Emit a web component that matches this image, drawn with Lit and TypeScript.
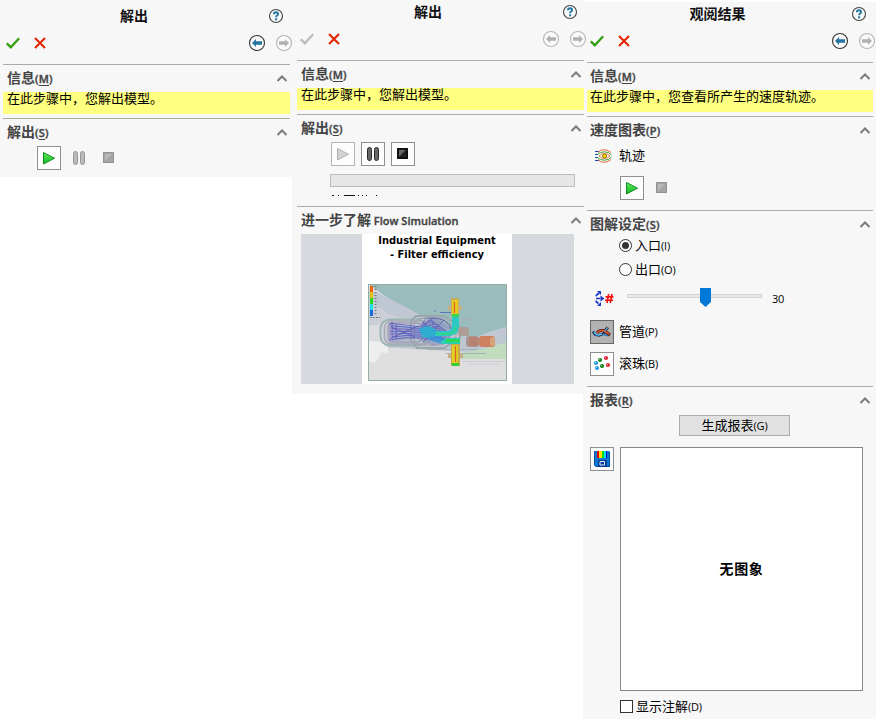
import { LitElement, html, css, svg, nothing } from "lit";
import { customElement, property } from "lit/decorators.js";

const sharedText = css`
  :host {
    box-sizing: border-box;
    font-family: "Open Sans", "Noto Sans CJK SC", sans-serif;
    font-size: 13px;
    line-height: 16px;
    color: #000;
  }
  svg { display: block; }
`;

const glyph: Record<string, unknown> = {
  playOn: svg`<defs><linearGradient id="g" x1="0" y1="0" x2="0" y2="1"><stop offset="0" stop-color="#5cf05c"/><stop offset="1" stop-color="#12b524"/></linearGradient></defs>
    <path d="M6.5 6.500V18L17.500 12.200Z" fill="url(#g)" stroke="#148a1e"/>`,
  playOff: svg`<path d="M6.500 6.500V18L17.500 12.200Z" fill="#d2d2d2" stroke="#b4b4b4"/>`,
  pauseOn: svg`<rect x="6.500" y="5.500" width="4" height="13" rx="2" fill="#686868" stroke="#282828"/><rect x="13.500" y="5.500" width="4" height="13" rx="2" fill="#686868" stroke="#282828"/>`,
  pauseOff: svg`<rect x="6.500" y="5.500" width="4" height="13" rx="2" fill="#bbb" stroke="#979797"/><rect x="13.500" y="5.500" width="4" height="13" rx="2" fill="#bbb" stroke="#979797"/>`,
  stopOn: svg`<rect x="6" y="6" width="11" height="11" fill="#111"/><path d="M8 15V8h7Z" fill="#666"/><path d="M8 15h7V8Z" fill="#222"/>`,
  stopOff: svg`<rect x="6.500" y="6.500" width="10" height="10" fill="#a5a5a5" stroke="#939393"/><path d="M8 15V8h7Z" fill="#b9b9b9"/>`,
  pipes: svg`<path d="M3 11.500L5 14.500L9 15.500L13 14L15 11.500" fill="none" stroke="#17365d" stroke-width="2.600"/>
    <path d="M4 12L6 14.500L9 15L12 14" fill="none" stroke="#58b5ef" stroke-width="1.400"/>
    <path d="M13 14L16 15.500H19" fill="none" stroke="#2c7cc0" stroke-width="1.600"/>
    <path d="M7 13Q9 10 13 10.500L16 12L20 15M14.500 11L18 7.500" fill="none" stroke="#3c1c1c" stroke-width="3"/>
    <path d="M7 13Q9 10 13 10.500L16 12L19.500 14.500" fill="none" stroke="#f05a28" stroke-width="1.500"/>
    <path d="M14.500 11L18 7.500" stroke="#58a5df" stroke-width="1.300"/>`,
  balls: svg`${[
    [16, 6, "#e02030"], [10, 8, "#108018"], [6, 11, "#2098e0"], [12, 14, "#108018"], [18, 13, "#e02030"], [7, 16, "#2098e0"],
  ].map(([x, y, c]) => svg`<circle cx=${x} cy=${y} r="2.100" fill=${c}/><circle cx=${Number(x) - 0.5} cy=${Number(y) - 0.5} r=".7" fill="#fff" opacity=".55"/>`)}`,
  disk: svg`<path d="M4 4H19L20 5V20H6L4 18Z" fill="#0878d4"/><path d="M4.500 4V18L6 19.500H19.500V5" fill="none" stroke="#0650a0"/>
    <path d="M7 4h2v7H7Z" fill="#e00"/><path d="M9 4h3v7H9Z" fill="#fd0"/><path d="M12 4h2v7h-2Z" fill="#0d2"/><path d="M14 4h2v7h-2Z" fill="#0de"/><path d="M16 4h1v7h-1Z" fill="#00c"/>
    <path d="M8 13h9v7H8Z" fill="#073d90"/><path d="M10 14.500h4.500V18H10Z" fill="#063a98" stroke="#d9ecff"/>`,
};

@customElement("tool-button")
class ToolButton extends LitElement {
  @property() icon = "";
  @property() look = "framed";
  static styles = [sharedText, css`
    :host { display: block; flex: none; width: 24px; height: 24px; }
    .box { box-sizing: border-box; width: 24px; height: 24px; }
    .box svg { width: 24px; height: 24px; }
    .framed, .faint, .pressed { border: 1px solid #8f8f8f; background: #fdfdfd; }
    .faint { border-color: #b5b5b5; }
    .pressed { border-color: #666; background: #b2b2b2; }
    .framed svg, .faint svg, .pressed svg { margin: -1px; }
  `];
  render() {
    return html`<div class="box ${this.look}"><svg viewBox="0 0 24 24">${glyph[this.icon]}</svg></div>`;
  }
}

@customElement("panel-section")
class PanelSection extends LitElement {
  @property() label = "";
  @property() key = "";
  @property() suffix = "";
  static styles = [sharedText, css`
    :host { display: block; border-top: 1px solid #aaa; }
    .head { height: 27px; display: flex; align-items: center; justify-content: space-between; padding: 0 2px 0 var(--inset, 4px); box-sizing: border-box; color: #444; }
    .name { font-size: 14px; font-weight: 600; white-space: nowrap; line-height: 20px; }
    .small, .key { font-size: 11px; -webkit-text-stroke: .35px #444; }
    .key { letter-spacing: .2px; }
    u { text-underline-offset: 2px; }
  `];
  render() {
    return html`<div class="head">
        <span class="name">${this.label}${this.key ? html`<span class="key">(<u>${this.key}</u>)</span>` : nothing}${this.suffix ? html`<span class="small"> ${this.suffix}</span>` : nothing}</span>
        <svg width="12" height="8" viewBox="0 0 12 8"><path d="M1.500 6L6 1.500L10.500 6" fill="none" stroke="#7b7b7b" stroke-width="2"/></svg>
      </div><slot></slot>`;
  }
}

@customElement("property-panel")
class PropertyPanel extends LitElement {
  @property() heading = "";
  @property() info = "";
  @property({ type: Boolean }) busy = false;
  static styles = [sharedText, css`
    :host { display: block; background: #f7f7f7; }
    .title { height: 24px; display: flex; align-items: center; padding-right: 6px; }
    .title b { flex: 1; padding-right: 3px; text-align: center; font-size: 14px; font-weight: 700; color: #111; line-height: 20px; }
    .tools { height: 30px; display: flex; align-items: center; margin: 0 -3px 6px 0; padding-left: 3px; }
    .grow { flex: 1; }
    .cross { margin-left: 14px; }
    .nav { display: flex; gap: 9px; width: 45px; }
    .note { background: #ffff80; height: 22px; line-height: 12px; padding-left: var(--inset, 4px); margin-bottom: 4px; box-sizing: border-box; white-space: nowrap; }
  `];
  arrow(on: boolean, back: boolean) {
    return html`<svg width="18" height="18" viewBox="0 0 18 18">
      <circle cx="9" cy="9" r="7.500" fill="#fafafa" stroke=${on ? "#333" : "#b5b5b5"} stroke-width="1.100"/>
      <path transform=${back ? "" : "translate(18 0) scale(-1 1)"} d="M4 9L8 5V7.200H14V10.800H8V13Z" fill=${on ? "#2475a0" : "#b1b1b1"}/></svg>`;
  }
  render() {
    return html`
      <div class="title"><b>${this.heading}</b>
        <svg width="16" height="16" viewBox="0 0 16 16"><circle cx="8" cy="8" r="6.500" fill="#f6f9fa" stroke="#444" stroke-width="1.100"/>
          <path d="M5.900 6.200Q6 4.300 8.100 4.300Q10.200 4.400 10.100 6.100Q10 7.100 8.900 7.700Q8.100 8.200 8.100 9.300" fill="none" stroke="#2475a0" stroke-width="1.900"/><rect x="7.100" y="10.300" width="2" height="2" fill="#2475a0"/></svg>
      </div>
      <div class="tools">
        <svg width="14" height="12" viewBox="0 0 14 12"><path d="M0.800 6.300L4.800 10.200L13.200 1.200" fill="none" stroke=${this.busy ? "#bcbcbc" : "#35a012"} stroke-width="2.400"/></svg>
        <svg class="cross" width="12" height="12" viewBox="0 0 12 12"><path d="M1 1L11 11M11 1L1 11" stroke="#e32400" stroke-width="2.100"/></svg>
        <span class="grow"></span>
        <div class="nav">${this.arrow(!this.busy, true)}${this.arrow(false, false)}</div>
      </div>
      <panel-section label="信息" key="M"><div class="note">${this.info}</div></panel-section>
      <slot></slot>`;
  }
}

@customElement("flow-picture")
class FlowPicture extends LitElement {
  static styles = css`:host, svg { display: block; }`;
  render() {
    const lanes = [0, 1, 2, 3, 4, 5, 6];
    return html`<svg width="139" height="97" viewBox="0 0 139 97">
      <rect width="139" height="97" fill="#dedede"/>
      <path d="M0 0H139V43L122 48L106 54L60 42L14 10Z" fill="#9bbcbd"/>
      <path d="M8 8L40 24L65 39L105 54L139 43V66L100 68L60 66L0 62V8Z" fill="#bec7d2"/>
      <path d="M0 14L20 30L44 36L20 62L0 65Z" fill="#cccfd7"/>
      <path d="M0 42L14 40V62L0 72Z" fill="#dcdde0"/>
      <path d="M85 70L112 66L139 58V75H86Z" fill="#c1dbbd"/>
      <path d="M1 57L12 58L20 62V70L14 68L8 78H1Z" fill="#eee"/>
      <g fill="none">
        <rect x="12.500" y="35.500" width="46" height="26" rx="9" stroke="#9db4b4" stroke-width="2"/>
        <rect x="16.500" y="37" width="46" height="23" rx="7" stroke="#a7a9b6" stroke-width="1.500"/>
        <rect x="20" y="39" width="34" height="19" rx="4" stroke="#8f8ca8"/>
        <path d="M43 37L48 32H76L92 43V54L76 64H49L43 57Z" stroke="#9aa5ac" stroke-width="2"/>
        <path d="M46 39L50 34.500H74L88 45V53L74 61H51L46 56Z" stroke="#a29aa8"/>
        <path d="M60 65.500H110M78 69.500H118M80 35.500H104V40M82 38H96" stroke="#a3b2b4"/>
        <path d="M94 77.500H138M100 80H130" stroke="#cdcfd8"/>
      </g>
      <path d="M23 39L47 43L66 33L84 44L80 57L66 62L48 55L24 57Z" fill="#858bbb" opacity=".55"/>
      <g fill="none" stroke-width=".8" opacity=".85">
        ${lanes.map(i => svg`<path d="M${22 + (i % 3)} ${39 + i * 2.8}L38 ${41 + i * 2.1}L52 ${43 + i * 1.8}L${64 + i * 2} ${36 + i * 3.6}" stroke=${i % 2 ? "#3b58cf" : "#5b50bf"}/>
          <ellipse cx=${60 + i * 2} cy=${42 + i * 1.500} rx=${5 + i} ry=${8 - i * 0.6} stroke="#5a5fb8"/>`)}
        <path d="M22 39V57M24 38V56M28 41V55M23 43L47 53M23 54L50 42M54 38L80 59M55 58L76 36M62 34Q79 33 84 46" stroke="#4e46b8"/>
        <path d="M66 28L68 26M72 28.500H88" stroke="#4356b0"/>
      </g>
      <path d="M50 46L58 42L67 46L75 54L83 57L73 60L61 56Z" fill="#2f98de" opacity=".75"/>
      <path d="M52 44L62 42L69 46L66 53L54 54Z" fill="#2ab4d0" opacity=".75"/>
      <path d="M68 47H80Q84 46 84 41V31H91V43Q91 51 81 52H67Z" fill="#2cc9c4"/>
      <path d="M72 58L79 54H92V60H75Z" fill="#2acfb0"/><path d="M78 56.500H92" stroke="#29dc45" stroke-width="2.500"/>
      <path d="M68 50H82Q87 49 88 42" fill="none" stroke="#35d77a" stroke-width="1.500"/>
      <rect x="90" y="43" width="11" height="9" rx="3" fill="#ad9d97"/><rect x="98" y="52" width="13" height="11" rx="3" fill="#aa9590"/><rect x="101" y="53" width="9" height="9" rx="2" fill="#b78270"/>
      <rect x="111" y="52" width="16" height="11" rx="3" fill="#cf805f"/><rect x="122" y="53" width="5" height="9" rx="2" fill="#d4a577"/>
      <path d="M80 22H94V26H80ZM80 70H95V74H80Z" fill="#c8ae86"/>
      <rect x="83" y="14" width="8" height="17" fill="#cfaa56"/><rect x="84" y="16" width="6" height="14" fill="#e3cc22"/><rect x="84" y="30" width="7" height="3" fill="#3bd44c"/>
      <rect x="83" y="60" width="9" height="22" fill="#c9a849"/><rect x="84" y="61" width="6" height="18" fill="#dfcd22"/><rect x="84" y="79" width="7" height="3" fill="#30cf35"/>
      <path d="M86.500 18V29M87.500 62V78" stroke="#e06020" stroke-width="1.200"/>
      ${["#f2640f", "#dfc319", "#25da25", "#1be1e9", "#1c69df"].map((c, i) => svg`<rect x="2" y=${2 + i * 6} width="3" height="6" fill=${c}/>`)}
      <path d="M7.500 2V32" stroke="#737b80" stroke-width="2" stroke-dasharray="1 2"/><path d="M2 33.500H12" stroke="#68806c" stroke-dasharray="2 1"/>
      <rect x=".5" y=".5" width="138" height="96" fill="none" stroke="#95aba5"/>
    </svg>`;
  }
}

@customElement("app-root")
class AppRoot extends LitElement {
  static styles = [sharedText, css`
    :host { display: flex; width: 879px; height: 719px; background: #fff; align-items: flex-start; overflow: hidden; }
    property-panel { flex: none; box-sizing: border-box; }
    .solve { width: 292px; height: 177px; padding: 4px 2px 0 3px; }
    .running { width: 292px; margin-right: -1px; height: 394px; padding-left: 5px; position: relative; z-index: 1; }
    .results { width: 293px; height: 717px; margin-top: 2px; padding: 0 3px 0 4px; --inset: 3px; }
    .row { display: flex; align-items: center; }
    .buttons { gap: 6px; padding-left: 34px; }
    .progress { box-sizing: border-box; width: 245px; height: 13px; border: 1px solid #bcbcbc; background: #e6e6e6; margin: 8px 0 7px 33px; }
    .status { margin: 0 0 10px 33px; }
    .learn { box-sizing: border-box; width: 273px; height: 150px; margin-left: 4px; background: #d6dade; padding-left: 61px; }
    .card { width: 150px; height: 150px; background: #fff; display: flex; flex-direction: column; align-items: center; justify-content: space-between; box-sizing: border-box; padding-bottom: 3px; }
    .card-title { font: bold 11px/14px "DejaVu Sans Condensed", "DejaVu Sans", sans-serif; text-align: center; white-space: nowrap; }
    .small { font-size: 11px; letter-spacing: -.2px; }
    .trace { height: 23px; gap: 7px; padding-left: 8px; }
    .trace span, .option > span { margin-top: -2px; }
    .play { gap: 6px; padding: 9px 0 10px 33px; }
    .radio { height: 15px; padding-left: 32px; gap: 3px; margin-bottom: 9px; }
    .slider { height: 21px; margin-top: 11px; padding-left: 8px; }
    .track { box-sizing: border-box; width: 135px; height: 4px; border: 1px solid #d2d2d2; background: #e8e8e8; margin: -5px 10px 0 13px; position: relative; }
    .thumb { position: absolute; left: 72px; top: -7px; }
    .option { gap: 5px; padding-left: 3px; margin-bottom: 8px; }
    .option.first { margin-top: 11px; }
    .option.last { margin-bottom: 10px; }
    .report { box-sizing: border-box; width: 111px; height: 21px; border: 1px solid #adadad; background: #e1e1e1; text-align: center; line-height: 18px; margin: 1px 0 11px 92px; }
    .preview { display: flex; gap: 6px; padding-left: 3px; }
    .canvas { box-sizing: border-box; width: 243px; height: 244px; border: 1px solid #828790; background: #fff; display: flex; align-items: center; justify-content: center; font-size: 14px; font-weight: 700; letter-spacing: .6px; }
    .check { height: 13px; gap: 3px; padding-left: 33px; margin-top: 9px; }
    .tick { box-sizing: border-box; width: 13px; height: 13px; border: 1px solid #333; background: #fff; }
  `];
  radio(label: string, key: string, on: boolean) {
    return html`<div class="row radio"><svg width="13" height="13" viewBox="0 0 13 13"><circle cx="6.500" cy="6.500" r="6" fill="#fff" stroke="#333"/>${on ? svg`<circle cx="6.500" cy="6.500" r="3.500" fill="#333"/>` : nothing}</svg>
      <span>${label}<span class="small">(${key})</span></span></div>`;
  }
  render() {
    return html`
      <property-panel class="solve" heading="解出" info="在此步骤中，您解出模型。">
        <panel-section label="解出" key="S">
          <div class="row buttons"><tool-button icon="playOn"></tool-button><tool-button icon="pauseOff" look="bare"></tool-button><tool-button icon="stopOff" look="bare"></tool-button></div>
        </panel-section>
      </property-panel>
      <property-panel class="running" heading="解出" info="在此步骤中，您解出模型。" busy>
        <panel-section label="解出" key="S">
          <div class="row buttons"><tool-button icon="playOff" look="faint"></tool-button><tool-button icon="pauseOn"></tool-button><tool-button icon="stopOn"></tool-button></div>
          <div class="progress"></div>
          <svg class="status" width="50" height="2" viewBox="0 0 50 2"><path d="M2 1.500h2M8 1.500h1M14 1.500h11M28 1.500h1M32 1.500h1M36 1.500h1M46 1.500h1" stroke="#111"/></svg>
        </panel-section>
        <panel-section label="进一步了解" suffix="Flow Simulation">
          <div class="learn"><div class="card"><div class="card-title">Industrial Equipment<br>- Filter efficiency</div><flow-picture></flow-picture></div></div>
        </panel-section>
      </property-panel>
      <property-panel class="results" heading="观阅结果" info="在此步骤中，您查看所产生的速度轨迹。">
        <panel-section label="速度图表" key="P">
          <div class="row trace"><svg width="17" height="14" viewBox="0 0 17 14" fill="none">
            <path d="M0 2.500H4M0 5.500H3M0 8.500H3M0 11.500H4" stroke="#1b42b0"/><path d="M3 3.500Q5 .7 9 .7T16 3.500M3 10.500Q5 13.300 9 13.300T16 10.500" stroke="#e56c3c"/>
            <path d="M2.500 5.500Q5 2.800 9.500 2.800T16.500 6M2.500 8.500Q5 11.200 9.500 11.200T16.500 8" stroke="#37a33a"/><path d="M4 7Q6 4.600 9.500 4.600T15 7Q13 9.400 9.500 9.400T4 7" stroke="#e56c3c" stroke-width=".9"/>
            <circle cx="9.500" cy="7" r="2" fill="#ffd900" stroke="#8e7600"/></svg><span>轨迹</span></div>
          <div class="row play"><tool-button icon="playOn"></tool-button><tool-button icon="stopOff" look="bare"></tool-button></div>
        </panel-section>
        <panel-section label="图解设定" key="S">
          ${this.radio("入口", "I", true)}${this.radio("出口", "O", false)}
          <div class="row slider">
            <svg width="19" height="15" viewBox="0 0 19 15" fill="none"><path d="M4 2L1.200 4.500V5.500M1.200 9.500V10.500L4 13M1 7.500H7" stroke="#1838c8" stroke-width="1.700" stroke-dasharray="4 .6"/><path d="M2 0H6V4ZM2 15H6V11ZM5.500 4.500L9.500 7.500L5.500 10.500Z" fill="#1838c8"/><path d="M13.700 3L12 12M17 3L15.300 12M10.500 5.900H18.500M10 9.300H18" stroke="#f01010" stroke-width="1.600"/></svg>
            <div class="track"><svg class="thumb" width="11" height="19" viewBox="0 0 11 19"><path d="M0 0H11V14L5.500 19L0 14Z" fill="#0078d7"/></svg></div>
            <span class="small">30</span>
          </div>
          <div class="row option first"><tool-button icon="pipes" look="pressed"></tool-button><span>管道<span class="small">(P)</span></span></div>
          <div class="row option last"><tool-button icon="balls"></tool-button><span>滚珠<span class="small">(B)</span></span></div>
        </panel-section>
        <panel-section label="报表" key="R">
          <div class="report">生成报表<span class="small">(G)</span></div>
          <div class="preview"><tool-button icon="disk"></tool-button><div class="canvas">无图象</div></div>
          <div class="row check"><span class="tick"></span><span>显示注解<span class="small">(D)</span></span></div>
        </panel-section>
      </property-panel>`;
  }
}
